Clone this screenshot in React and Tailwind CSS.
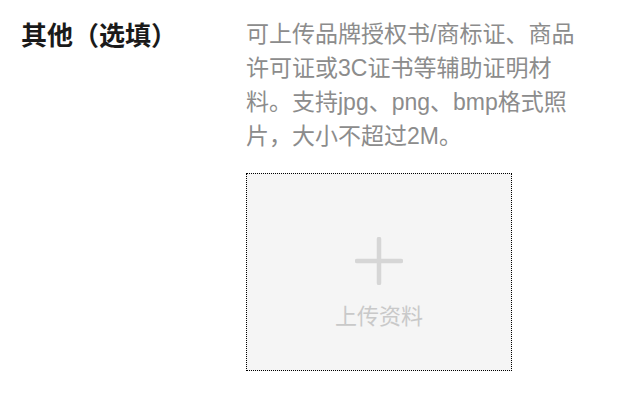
export default function App() {
  return (
    <div className="w-[617px] h-[407px] bg-white flex pl-[21px] pt-[17px]">
      <div className="w-[225px] shrink-0">
        <h2 className="text-[26px] leading-[34px] font-bold text-[#1a1a1a] font-['Noto_Sans_CJK_SC',serif]">
          其他（选填）
        </h2>
      </div>

      <div className="flex flex-col">
        <p className="w-[340px] text-[23px] leading-[34px] text-[#8c8c8c] font-['Liberation_Sans','Noto_Sans_CJK_SC',sans-serif]">
          可上传品牌授权书/商标证、商品许可证或3C证书等辅助证明材料。支持jpg、png、bmp格式照片，大小不超过2M。
        </p>

        <button className="mt-[20px] w-[266px] h-[198px] bg-[#f5f5f5] border border-dotted border-black flex flex-col items-center pt-[63px]">
          <svg width="48" height="48" viewBox="0 0 48 48">
            <path d="M24 2v44M2 24h44" stroke="#d6d6d6" strokeWidth="4.5" strokeLinecap="round" />
          </svg>
          <span className="mt-[14px] text-[22px] leading-[30px] text-[#c9c9c9] font-['Noto_Sans_CJK_SC',sans-serif]">
            上传资料
          </span>
        </button>
      </div>
    </div>
  );
}
